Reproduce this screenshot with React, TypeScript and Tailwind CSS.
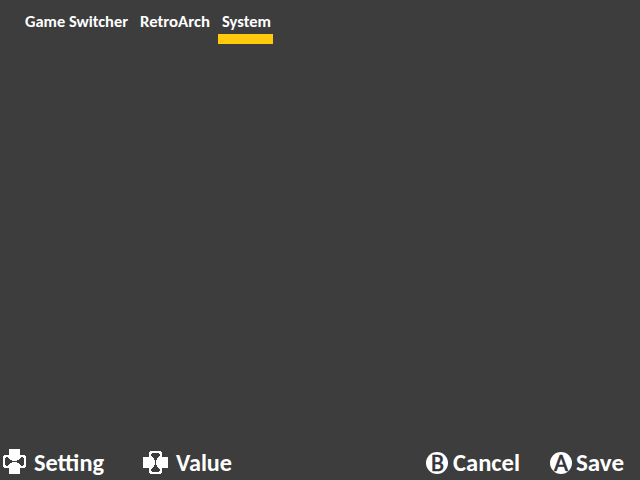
import React from "react";

const face = "font-['Carlito','Calibri','Lato',sans-serif] font-bold text-white whitespace-nowrap";

function Label({ text, width, size, height, baseline }: { text: string; width: number; size: number; height: number; baseline: number }) {
  return (
    <svg width={width} height={height} className="block shrink-0 overflow-visible">
      <text x="0" y={baseline} fontSize={size} fill="currentColor" textLength={width} lengthAdjust="spacingAndGlyphs">
        {text}
      </text>
    </svg>
  );
}

function TabLabel({ text, width }: { text: string; width: number }) {
  return <Label text={text} width={width} size={15.4} height={21} baseline={14} />;
}

function HintLabel({ text, width }: { text: string; width: number }) {
  return <Label text={text} width={width} size={25} height={34} baseline={25} />;
}

function Dpad({ className = "" }: { className?: string }) {
  return (
    <svg width="25" height="25" viewBox="0 0 25 25" className={`block shrink-0 ${className}`} shapeRendering="crispEdges">
      <path fill="#fff" d="M7 0h11v6h5v1h1v11h-1v1h-5v6H7v-6H2v-1H1V7h1V6h5z" />
      <path
        fill="#3d3d3d"
        d="M4 8h2v1h1v1h1v1h2v1h5v-1h2v-1h1V9h1V8h2v1h1v7h-1v1h-2v-1h-1v-1h-1v-1h-2v-1h-5v1H8v1H7v1H6v1H4v-1H3V9h1z"
      />
    </svg>
  );
}

function RoundButton({ letter, width }: { letter: string; width: number }) {
  return (
    <span className="flex h-[22px] w-[22px] shrink-0 items-start justify-center rounded-full bg-white font-normal text-[#303038]">
      <svg width={width} height="22" className="block overflow-visible">
        <text
          x="0"
          y="18.5"
          fontSize="24"
          fill="currentColor"
          stroke="currentColor"
          strokeWidth="0.6"
          textLength={width}
          lengthAdjust="spacingAndGlyphs"
        >
          {letter}
        </text>
      </svg>
    </span>
  );
}

export default function App() {
  return (
    <div className={`flex h-[480px] w-[640px] flex-col justify-between overflow-hidden bg-[#3d3d3d] ${face}`}>
      <nav className="flex pt-[13px] pl-[25px]">
        <div className="mr-3"><TabLabel text="Game Switcher" width={103} /></div>
        <div className="mr-2"><TabLabel text="RetroArch" width={70} /></div>
        <div className="w-[55px]">
          <div className="pl-1"><TabLabel text="System" width={49} /></div>
          <div className="h-[10px] bg-[#ffc90e]" />
        </div>
      </nav>
      <footer className="flex h-[34px] items-start">
        <Dpad className="mt-[3px] mr-[7px] ml-[2px]" />
        <HintLabel text="Setting" width={70} />
        <Dpad className="mt-1 mr-2 ml-[39px] rotate-90" />
        <HintLabel text="Value" width={56} />
        <div className="mt-1.5 mr-[5px] ml-[194px]"><RoundButton letter="B" width={13} /></div>
        <HintLabel text="Cancel" width={67} />
        <div className="mt-1.5 mr-1 ml-[30px]"><RoundButton letter="A" width={14} /></div>
        <HintLabel text="Save" width={48} />
      </footer>
    </div>
  );
}
